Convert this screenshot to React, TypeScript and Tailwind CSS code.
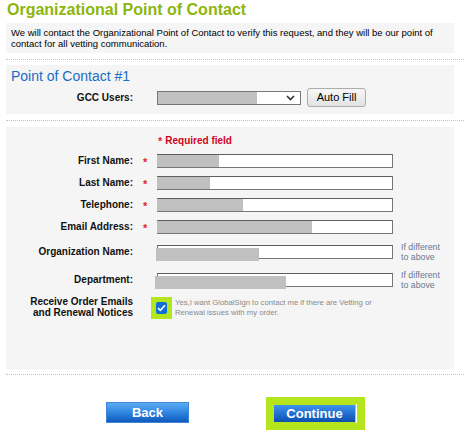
import React from 'react';

const REDACT = 'bg-[#c0c0c0]';

function Star() {
  return <span className="text-[11px] font-bold leading-[10px] text-[#e0262b]">*</span>;
}

interface FieldProps {
  label: string;
  required?: boolean;
  fill: number;
  note?: boolean;
  shift?: number;
}

function Field({ label, required, fill, note, shift }: FieldProps) {
  return (
    <div className={`flex items-center ${note ? 'h-[22px]' : 'h-[14px]'}`}>
      <div className="w-[127px] text-right text-[10px] font-bold leading-[12px] text-[#111]">{label}</div>
      <div className="flex w-[24px] justify-start pl-[10px] pt-[2px]">{required && <Star />}</div>
      <div className="relative h-[14px] w-[236px] border border-[#767676] border-t-[#5f5f5f] bg-white">
        {shift === undefined ? (
          <div className={`absolute -left-px top-0 bottom-0 ${REDACT}`} style={{ width: fill }} />
        ) : (
          <div
            className={`absolute top-[2px] h-[13px] ${REDACT}`}
            style={{ left: shift, width: fill }}
          />
        )}
      </div>
      {note && (
        <div className="ml-[8px] text-[8.8px] leading-[10px] text-[#6b7890]">
          If different
          <br />
          to above
        </div>
      )}
    </div>
  );
}

function Dots() {
  return <div className="border-t border-dotted border-[#c4c4c4]" />;
}

export default function App() {
  return (
    <div className="h-[436px] w-[464px] overflow-hidden bg-white pl-[6px] pt-[1px] font-['Liberation_Sans',Arial,sans-serif] text-black">
      <h1 className="pl-[1px] text-[16px] font-bold leading-[18px] text-[#8db50c]">
        Organizational Point of Contact
      </h1>

      <div className="mt-[4px] h-[30px] w-[448px] bg-[#f5f5f5] pl-[5px] pt-[5px] text-[9.5px] leading-[10.5px]">
        We will contact the Organizational Point of Contact to verify this request, and they will be our point of
        contact for all vetting communication.
      </div>

      <div className="mt-[6px]">
        <Dots />
      </div>

      <div className="mt-[5px] h-[49px] w-[448px] bg-[#f5f5f5] pt-[2px]">
        <h2 className="pl-[5px] text-[14px] leading-[18px] text-[#1a6cc4]">Point of Contact #1</h2>
        <div className="mt-[3px] flex h-[19px] items-center">
          <div className="w-[127px] text-right text-[10px] font-bold leading-[12px] text-[#111]">GCC Users:</div>
          <div className="ml-[24px] flex h-[14px] w-[144px] items-center border border-[#767676] bg-white">
            <div className={`h-full w-[99px] ${REDACT}`} />
            <svg className="ml-auto mr-[5px]" width="9" height="6" viewBox="0 0 9 6">
              <path d="M1 1 L4.5 4.5 L8 1" fill="none" stroke="#333" strokeWidth="1.6" />
            </svg>
          </div>
          <button className="ml-[6px] h-[19px] w-[59px] rounded-[3px] border border-[#acacac] bg-gradient-to-b from-[#f7f7f7] to-[#e2e2e2] text-[11px] leading-[17px] text-black">
            Auto Fill
          </button>
        </div>
      </div>

      <div className="mt-[6px]">
        <Dots />
      </div>

      <div className="mt-[6px] h-[242px] w-[448px] bg-[#f5f5f5] pt-[8px]">
        <div className="flex h-[12px] items-center pl-[152px]">
          <Star />
          <span className="ml-[3px] text-[10px] font-bold leading-[12px] text-[#d0021b]">Required field</span>
        </div>

        <div className="mt-[7px] flex flex-col gap-[8px]">
          <Field label="First Name:" required fill={62} />
          <Field label="Last Name:" required fill={53} />
          <Field label="Telephone:" required fill={86} />
          <Field label="Email Address:" required fill={155} />
        </div>

        <div className="mt-[7px] flex flex-col gap-[6px]">
          <Field label="Organization Name:" fill={103} note shift={-2} />
          <Field label="Department:" fill={131} note shift={-3} />

          <div className="flex h-[22px] items-center">
            <div className="w-[127px] text-right text-[10px] font-bold leading-[10.6px] text-[#111]">
              Receive Order Emails
              <br />
              and Renewal Notices
            </div>
            <div className="ml-[18px] flex h-[22px] w-[21px] items-center justify-center bg-[#b5e61d]">
              <div className="flex h-[12px] w-[11px] items-center justify-center rounded-[2px] bg-[#0f6fd9]">
                <svg width="9" height="8" viewBox="0 0 9 8">
                  <path d="M1 4.2 L3.4 6.4 L8 1.3" fill="none" stroke="#fff" strokeWidth="1.6" />
                </svg>
              </div>
            </div>
            <div className="ml-[3px] text-[7.7px] leading-[10px] text-[#8a8a8a]">
              Yes,I want GlobalSign to contact me if there are Vetting or
              <br />
              Renewal issues with my order.
            </div>
          </div>
        </div>
      </div>

      <div className="mt-[5px]">
        <Dots />
      </div>

      <div className="mt-[22px] flex items-start">
        <button className="ml-[100px] mt-[5px] h-[21px] w-[83px] border border-[#3d85d6] bg-gradient-to-b from-[#5aaaf3] via-[#2f86e0] to-[#1059bd] text-[13px] font-bold leading-[19px] text-white">
          Back
        </button>
        <div className="ml-[77px] flex h-[33px] w-[99px] items-center bg-[#b5e61d] pl-[8px]">
          <button className="h-[17px] w-[81px] bg-gradient-to-b from-[#3f94ea] via-[#2370d2] to-[#0c4fae] text-[13px] font-bold leading-[17px] text-white">
            Continue
          </button>
          <div className="ml-[1px] h-[19px] w-[1px] bg-white" />
        </div>
      </div>
    </div>
  );
}
